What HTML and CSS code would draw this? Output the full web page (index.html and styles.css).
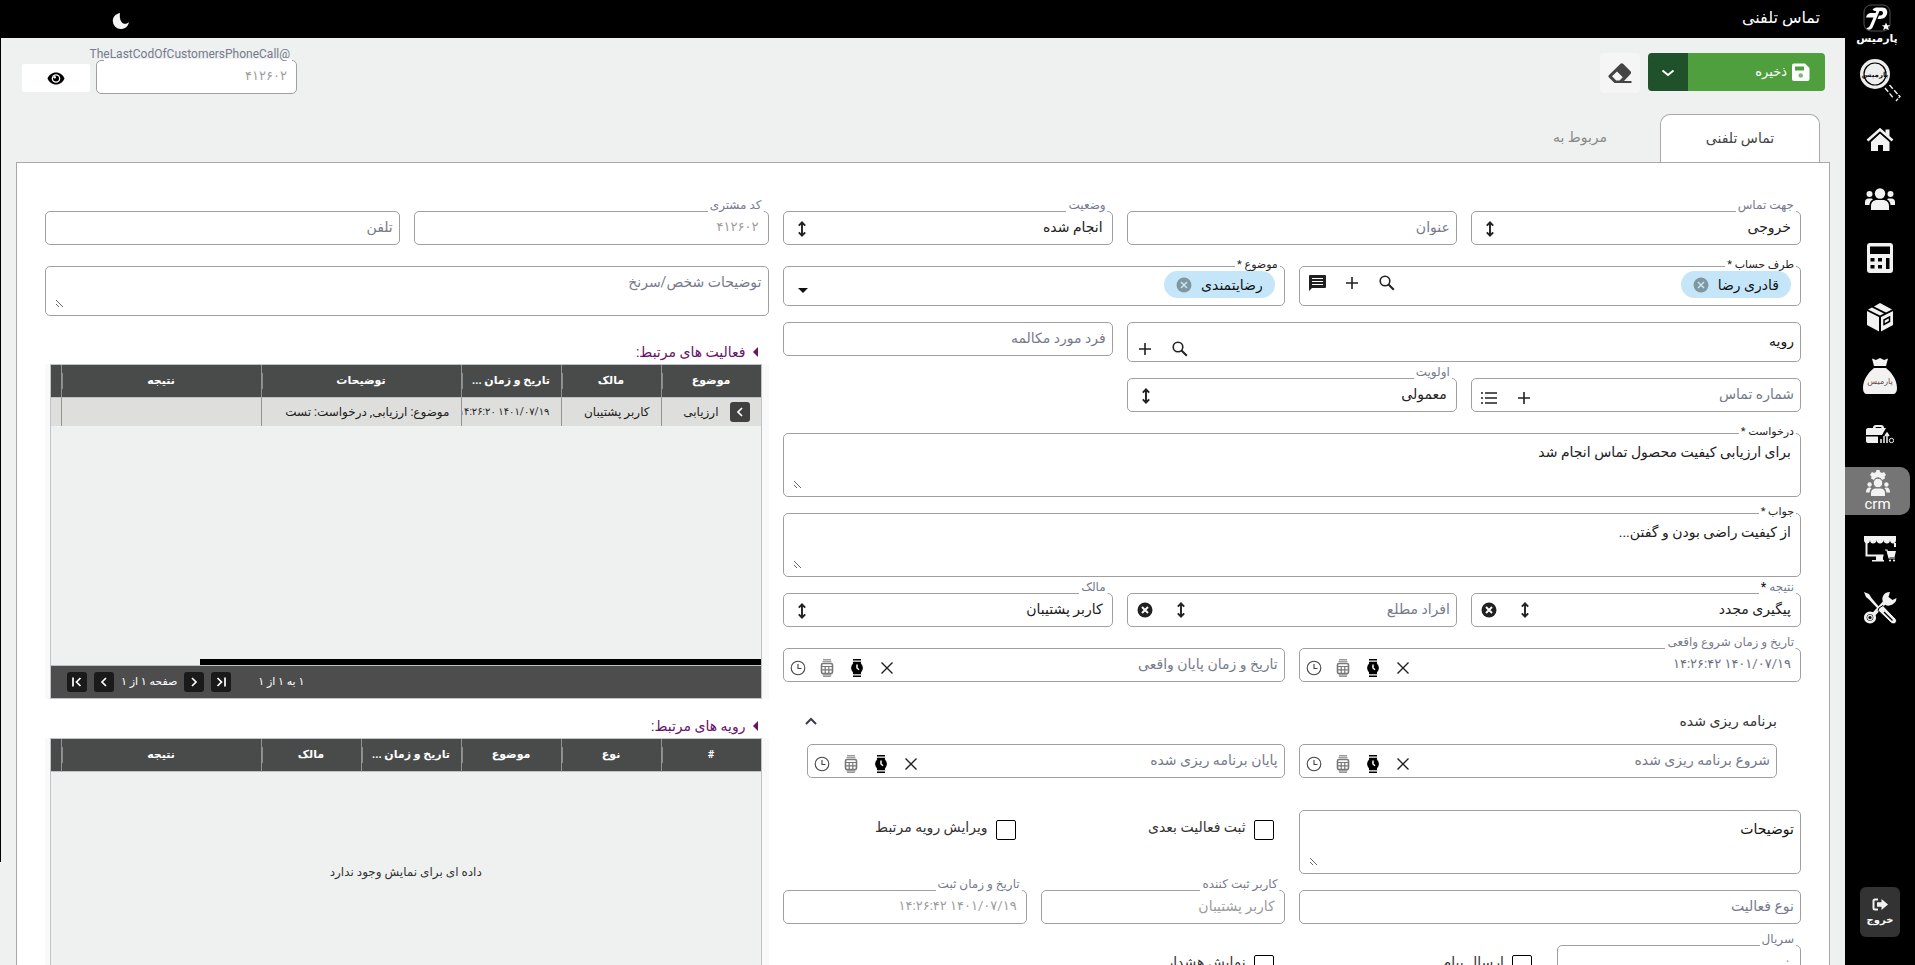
FILE: index.html
```html
<!DOCTYPE html>
<html lang="fa" dir="rtl">
<head>
<meta charset="utf-8">
<title>تماس تلفنی</title>
<link rel="stylesheet" href="styles.css">
</head>
<body>
<svg class="sprite" aria-hidden="true">
  <symbol id="updown" viewBox="0 0 10 16"><path d="M5 1.5v13M1.8 4.6 5 1.4l3.2 3.2M1.8 11.4 5 14.6l3.2-3.2" fill="none" stroke="currentColor" stroke-width="1.9"/></symbol>
  <symbol id="plus" viewBox="0 0 14 14"><path d="M7 1v12M1 7h12" fill="none" stroke="currentColor" stroke-width="1.6"/></symbol>
  <symbol id="search" viewBox="0 0 16 16"><circle cx="6" cy="6" r="4.8" fill="none" stroke="currentColor" stroke-width="1.6"/><path d="m9.5 9.5 5.3 5.3" stroke="currentColor" stroke-width="2"/></symbol>
  <symbol id="comment" viewBox="0 0 18 18"><path d="M2 1h15a1 1 0 0 1 1 1v11a1 1 0 0 1-1 1H4l-3 3V2a1 1 0 0 1 1-1z" fill="currentColor"/><path d="M4 4.5h11M4 7.5h11M4 10.5h11" stroke="#fff" stroke-width="1.2"/></symbol>
  <symbol id="list" viewBox="0 0 16 14"><path d="M4 2h12M4 7h12M4 12h12M0 2h2M0 7h2M0 12h2" stroke="currentColor" stroke-width="1.6"/></symbol>
  <symbol id="clear" viewBox="0 0 16 16"><circle cx="8" cy="8" r="7.5" fill="currentColor"/><path d="m5 5 6 6m0-6-6 6" stroke="#fff" stroke-width="1.9"/></symbol>
  <symbol id="chipx" viewBox="0 0 16 16"><circle cx="8" cy="8" r="7.5" fill="#80979f"/><path d="m5 5 6 6m0-6-6 6" stroke="#c5e6f8" stroke-width="1.5"/></symbol>
  <symbol id="times" viewBox="0 0 14 14"><path d="m1.5 1.5 11 11m0-11-11 11" stroke="currentColor" stroke-width="1.4"/></symbol>
  <symbol id="watch" viewBox="0 0 12 18"><path d="M2 0h8v1.500H2zM2 16.500h8V18H2zM2 2.800h8v2H2zM2 13.200h8v2H2z" fill="#000"/><circle cx="6" cy="9" r="5.900" fill="#000"/><path d="M6 5.400V9l2 1.800" fill="none" stroke="#fff" stroke-width="1.500"/></symbol>
  <symbol id="dwatch" viewBox="0 0 14 18"><path d="M3 .8h8M3 17.200h8" stroke="#999" stroke-width="1.600"/><path d="M2.500 2.700h9M2.500 15.800h9" stroke="#888" stroke-width="1"/><rect x="1.500" y="4.500" width="11" height="10" rx="1.500" fill="none" stroke="#777" stroke-width="1.600"/><path d="M2 7.500h10M2 10.800h10M5.200 7.500v7M8.800 7.500v7" stroke="#777" stroke-width="1.200"/></symbol>
  <symbol id="clock" viewBox="0 0 16 16"><circle cx="8" cy="8" r="6.800" fill="none" stroke="#444" stroke-width="1.100"/><path d="M8 4v4.500h3.500" fill="none" stroke="#444" stroke-width="1.100"/></symbol>
  <symbol id="left" viewBox="0 0 8 12"><path d="M6 2 2 6l4 4" fill="none" stroke="currentColor" stroke-width="1.700"/></symbol>
  <symbol id="first" viewBox="0 0 12 12"><path d="M2 1.500v9M9.500 2l-4 4 4 4" fill="none" stroke="currentColor" stroke-width="1.700"/></symbol>
  <symbol id="people" viewBox="0 0 30 22"><g fill="#f2f2f2"><circle cx="15" cy="5.500" r="5.200"/><circle cx="4.500" cy="6" r="3"/><circle cx="25.500" cy="6" r="3"/><path d="M6 22v-4c0-4 3-6 6-6h6c3 0 6 2 6 6v4zM0 17v-3c0-2 1.500-3.500 3.500-3.500H6c1 0 1.500.3 2 .8-2 1.200-3.400 3.200-3.600 5.700zM30 17v-3c0-2-1.500-3.500-3.500-3.500H24c-1 0-1.500.3-2 .8 2 1.200 3.400 3.200 3.600 5.700z"/></g></symbol>
</svg>
<div class="shell">
  <nav class="side" aria-label="منوی اصلی">
    <a class="brand" href="#">
      <svg width="28" height="28" viewBox="0 0 28 28"><rect x="1" y="1" width="26" height="26" rx="7" fill="none" stroke="#777" stroke-width=".7"/><path d="M9.500 5.500C11 4 12.500 3.500 14 3.500h5.500c7 0 6.500 11.500-2.500 11.500h-2.500l1.500-3.500h1.500c3 0 3.500-4.500.5-4.500h-1.500L10 22.500C8.500 26.500 4 26.500 3.500 24c2 0 2.800-1 3.500-2.500l3.500-8H3c.5-3 2.500-4.500 5-4.500h4.500l.8-1.700c-1.500-.3-3-.8-3.800-1.800z" fill="#fff"/><path d="m23 18.500 1.200 2.700h3l-2.300 1.900.9 3.200-2.800-1.800-2.800 1.800.9-3.200-2.300-1.900h3z" fill="#fff"/></svg>
      <span>پارمیس</span>
    </a>
    <a class="finder" href="#" aria-label="جستجوی پارمیس">
      <svg width="42" height="44" viewBox="0 0 42 44"><circle cx="15" cy="15" r="15" fill="#eee"/><circle cx="15" cy="15" r="11" fill="none" stroke="#000" stroke-width="1.200"/><text x="15" y="18" font-size="7" font-weight="700" text-anchor="middle" fill="#111">پارمیس</text><path d="m25 29 8 9.500M29.500 26l8 9" fill="none" stroke="#eee" stroke-width="1.400" stroke-dasharray="5 2"/><path d="m38.500 36 1.500 1.500-4 4.500" fill="none" stroke="#eee" stroke-width="1.400" stroke-dasharray="4 1"/></svg>
    </a>
    <a class="item" href="#" aria-label="خانه"><svg width="28" height="24" viewBox="0 0 28 24"><path d="M14 5.500 23.500 14v9h-6.500v-6h-5v6H5v-9z" fill="#f2f2f2"/><path d="m1.500 12.500 12.500-11 12.500 11" fill="none" stroke="#f2f2f2" stroke-width="2.600"/><path d="m3 14.500 11-9.800 11 9.800" fill="none" stroke="#000"/><path d="M19.500 1.500h4V9l-4-3.500z" fill="#f2f2f2"/></svg></a>
    <a class="item" href="#" aria-label="اشخاص"><svg width="30" height="22"><use href="#people"/></svg></a>
    <a class="item" href="#" aria-label="حسابداری"><svg width="26" height="30" viewBox="0 0 26 30"><rect width="26" height="30" rx="3" fill="#f2f2f2"/><path d="M3 3.500h20V11H3z"/><path d="M3.500 15h4v3.500h-4zM11 15h4v3.500h-4zM3.500 22h4v3.500h-4zM11 22h4v3.500h-4zM19 15h3.500v11H19z"/></svg></a>
    <a class="item" href="#" aria-label="انبار"><svg width="28" height="30" viewBox="0 0 28 30"><path d="M1 9v14l12 6.500V15zM27 9v14l-12 6.500V15zM14 13.500 2 7.500l4-2 12 6zM20 10.500 8 4.500l6-3.500 12 6.500z" fill="#f2f2f2"/><path d="m18 18 5.500-3v4.500l-5.500 3z" fill="none" stroke="#000" stroke-width="1.500"/></svg></a>
    <a class="item" href="#" aria-label="خزانه"><svg width="36" height="38" viewBox="0 0 36 38"><path d="M10 1.500 14 3l4-2 4 2 4-1.500-2 7.500H12zM12 11h12c5 4 11 11 11 20 0 4-1.500 6-4 6H5c-2.500 0-4-2-4-6 0-9 6-16 11-20z" fill="#f2f2f2"/><text x="18" y="27" font-size="8" text-anchor="middle" fill="#6b4a45">پارمیس</text></svg></a>
    <a class="item" href="#" aria-label="گزارش"><svg width="28" height="20" viewBox="0 0 28 20"><path d="M7 3c0-2 1-3 3-3h5c2 0 3 1 3 3h2l-4 7H0V5c0-1 .8-2 2-2zm2.500 0h6c0-.8-.3-1-1-1h-4c-.7 0-1 .2-1 1zM0 11.500h12V18H2c-1.200 0-2-.8-2-2z" fill="#f2f2f2"/><path d="M15 18v-4M18 18v-7M21 18V9m-2 2 2-3 2 3" stroke="#f2f2f2" stroke-width="1.500" fill="none"/><circle cx="25.500" cy="15.500" r="2.200" fill="none" stroke="#f2f2f2"/></svg></a>
    <a class="item active" href="#"><svg width="24" height="27" viewBox="0 0 24 27"><g fill="#f2f2f2"><path d="M10.500 0h3l.5 2 2 1 2-1 2 3-1.500 1.500.5 2-3 1.500A4.300 4.300 0 0 0 8 10L5 8.500l.5-2L4 5l2-3 2 1 2-1z"/><circle cx="12" cy="13" r="4.800" stroke="#757575"/><circle cx="3.600" cy="14.500" r="2.200"/><circle cx="20.400" cy="14.500" r="2.200"/><path d="M5 26v-3c0-3 2-4.500 4.500-4.500h5c2.500 0 4.500 1.500 4.500 4.500v3zM0 22.500c0-3 1-5 3.500-5 1 0 1.500.3 2 .8-1.200 1-1.800 2.500-1.900 4.200zM24 22.500c0-3-1-5-3.500-5-1 0-1.500.3-2 .8 1.200 1 1.800 2.500 1.900 4.200z"/></g></svg><span>crm</span></a>
    <a class="item" href="#" aria-label="فروشگاه"><svg width="34" height="26" viewBox="0 0 34 26"><path d="M1 0h32v4c0 2-1.300 3.500-3 3.500S27 6 27 4c0 2-1 3.500-3 3.500S20.500 6 20.500 4c0 2-1.500 3.500-3.500 3.500S13.500 6 13.500 4c0 2-1.500 3.500-3.500 3.500S7 6 7 4c0 2-1.300 3.500-3 3.500S1 6 1 4z" fill="#f2f2f2"/><path d="M3.500 7v12.500h17M32 7v4" fill="none" stroke="#f2f2f2" stroke-width="2"/><path d="M9 24h12v1.600H9zM13 20h7v4h-7zM24 15h9l-1.500 6h-6z" fill="#f2f2f2"/><path d="m22 14 2 0 2 8h6" fill="none" stroke="#f2f2f2" stroke-width="1.200"/><circle cx="27" cy="24.500" r="1.100" fill="#f2f2f2"/><circle cx="31" cy="24.500" r="1.100" fill="#f2f2f2"/></svg></a>
    <a class="item" href="#" aria-label="تنظیمات"><svg width="34" height="34" viewBox="0 0 34 34"><path d="m1 1 5 2 2.500 4L17 17l-1.500 1.500L6 8.500 3 6z" fill="#f2f2f2"/><path d="M11 23 22 11" stroke="#f2f2f2" stroke-width="4"/><path d="m16 17 4-2.500L33 28c2 3-2 6.500-5 4L15 19.500z" fill="#f2f2f2" stroke="#000"/><path d="m21 21 8.500 8.500" stroke="#000" stroke-width="1.300"/><path d="M27 1c-6 0-9 5-7 10s9 5 13-1l.5-3-4 2-4-3z" fill="#f2f2f2"/><circle cx="7" cy="26.500" r="4.700" fill="#000" stroke="#f2f2f2" stroke-width="2.800"/><circle cx="7" cy="26.500" r="2.200" fill="none" stroke="#f2f2f2" stroke-width="1.200"/></svg></a>
    <button class="exit" type="button"><svg width="16" height="13" viewBox="0 0 16 13"><path d="M6 1.500H3c-1 0-1.500.5-1.500 1.500v7c0 1 .5 1.500 1.500 1.500h3" fill="none" stroke="#f2f2f2" stroke-width="2"/><path d="M5 4.200h4.500V1L16 6.500 9.500 12V8.800H5z" fill="#f2f2f2"/></svg><span>خروج</span></button>
  </nav>

  <div class="work">
    <header class="top">
      <h1>تماس تلفنی</h1>
      <button type="button" class="moon" aria-label="حالت شب"><svg width="18" height="18" viewBox="0 0 18 18"><path d="M8 1C3 2 .8 5.500.8 9a8 8 0 0 0 8 8c4 0 7.500-2.500 8.200-7-3 3.500-10.500 2.500-9-9z" fill="#f4f4f4"/></svg></button>
    </header>
    <main class="main">
      <div class="toolbar">
        <div class="save">
          <button type="button" class="save-main"><svg width="18" height="18" viewBox="0 0 18 18"><path d="M2 .5h11L17.500 5v11a2 2 0 0 1-2 2H2a2 2 0 0 1-2-2V2.500a2 2 0 0 1 2-2z" fill="#fff"/><path d="M3 3.500h9v4H3z" fill="#4f9f3f"/><circle cx="8.700" cy="12.500" r="2.300" fill="#7cba70"/></svg>ذخیره</button>
          <button type="button" class="save-more" aria-label="گزینه‌های ذخیره"><svg width="14" height="8" viewBox="0 0 14 8"><path d="m1.500 1.500 5.500 4.500 5.500-4.500" fill="none" stroke="#fff" stroke-width="2"/></svg></button>
        </div>
        <button type="button" class="erase" aria-label="پاک کردن"><svg width="24" height="20" viewBox="0 0 24 20"><path fill="#444" fill-rule="evenodd" d="M12.500.8c.8-.8 1.800-.8 2.600 0l7.400 7.500c.8.800.8 1.800 0 2.600L16 18h7.500v2H6.500L1 14.500c-.8-.8-.8-1.800 0-2.600zM9 8.500l-5 4.700L8.200 17.500h3.300l3.300-3.300z"/></svg></button>
        <div class="spacer"></div>
        <div class="field code">
          <label for="code">@TheLastCodOfCustomersPhoneCall</label>
          <input id="code" class="value num" value="۴۱۲۶۰۲" disabled>
        </div>
        <button type="button" class="eye" aria-label="نمایش"><svg width="18" height="13" viewBox="0 0 18 13"><path d="M9 .5c4 0 7 2.500 8.500 6-1.500 3.500-4.500 6-8.500 6S2 10 .5 6.500C2 3 5 .5 9 .5z"/><circle cx="9" cy="6.500" r="4.300" fill="#fff"/><circle cx="9" cy="6.500" r="3"/><circle cx="7.700" cy="5.300" r="1.200" fill="#fff"/></svg></button>
      </div>

      <div class="tabs" role="tablist">
        <button type="button" role="tab" class="tab on" aria-selected="true">تماس تلفنی</button>
        <button type="button" role="tab" class="tab" aria-selected="false">مربوط به</button>
      </div>

      <form class="panel">
        <section class="grid s7">
          <div class="field s4"><label for="dir">جهت تماس</label><select id="dir"><option>خروجی</option></select><svg class="ud"><use href="#updown"/></svg></div>
          <div class="field s4"><input aria-label="عنوان" placeholder="عنوان"></div>
          <div class="field s4"><label for="state">وضعیت</label><select id="state"><option>انجام شده</option></select><svg class="ud"><use href="#updown"/></svg></div>

          <div class="field tall s6"><label class="req" for="party">طرف حساب *</label>
            <span class="chip">قادری رضا<button type="button" aria-label="حذف قادری رضا"><svg><use href="#chipx"/></svg></button></span>
            <input id="party">
            <span class="acts up"><button type="button" aria-label="جستجو"><svg><use href="#search"/></svg></button><button type="button" aria-label="افزودن"><svg class="sm"><use href="#plus"/></svg></button><button type="button" aria-label="پیام"><svg class="lg"><use href="#comment"/></svg></button></span></div>
          <div class="field tall s6"><label class="req" for="subject">موضوع *</label>
            <span class="chip">رضایتمندی<button type="button" aria-label="حذف رضایتمندی"><svg><use href="#chipx"/></svg></button></span>
            <input id="subject"><span class="caret"></span></div>

          <div class="field tall s8"><input class="dark" aria-label="رویه" placeholder="رویه">
            <span class="acts low"><button type="button" aria-label="جستجو"><svg><use href="#search"/></svg></button><button type="button" aria-label="افزودن"><svg class="sm"><use href="#plus"/></svg></button></span></div>
          <div class="field s4"><input aria-label="فرد مورد مکالمه" placeholder="فرد مورد مکالمه"></div>

          <div class="field s4"><input aria-label="شماره تماس" placeholder="شماره تماس">
            <span class="acts low"><button type="button" aria-label="افزودن"><svg class="sm"><use href="#plus"/></svg></button><button type="button" aria-label="فهرست"><svg><use href="#list"/></svg></button></span></div>
          <div class="field s4"><label for="prio">اولویت</label><select id="prio"><option>معمولی</option></select><svg class="ud"><use href="#updown"/></svg></div>
          <div class="s4"></div>

          <div class="field area s12"><label class="req" for="ask">درخواست *</label><textarea id="ask">برای ارزیابی کیفیت محصول تماس انجام شد</textarea></div>
          <div class="field area s12"><label class="req" for="ans">جواب *</label><textarea id="ans">از کیفیت راضی بودن و گفتن...</textarea></div>

          <div class="field s4"><label for="res">نتیجه <b>*</b></label><select id="res"><option>پیگیری مجدد</option></select><span class="acts"><svg class="udi"><use href="#updown"/></svg><button type="button" aria-label="پاک کردن نتیجه"><svg><use href="#clear"/></svg></button></span></div>
          <div class="field s4"><select class="empty" aria-label="افراد مطلع"><option>افراد مطلع</option></select><span class="acts"><svg class="udi"><use href="#updown"/></svg><button type="button" aria-label="پاک کردن افراد مطلع"><svg><use href="#clear"/></svg></button></span></div>
          <div class="field s4"><label for="owner">مالک</label><select id="owner"><option>کاربر پشتیبان</option></select><svg class="ud"><use href="#updown"/></svg></div>

          <div class="field s6"><label for="start">تاریخ و زمان شروع واقعی</label><input id="start" class="value num date" value="۱۴۰۱/۰۷/۱۹ ۱۴:۲۶:۴۲">
            <span class="acts dt"><button type="button" aria-label="پاک کردن"><svg class="sm"><use href="#times"/></svg></button><button type="button" aria-label="اکنون"><svg class="w"><use href="#watch"/></svg></button><button type="button" aria-label="تقویم"><svg class="dw"><use href="#dwatch"/></svg></button><button type="button" aria-label="ساعت"><svg><use href="#clock"/></svg></button></span></div>
          <div class="field s6"><input aria-label="تاریخ و زمان پایان واقعی" placeholder="تاریخ و زمان پایان واقعی">
            <span class="acts dt"><button type="button" aria-label="پاک کردن"><svg class="sm"><use href="#times"/></svg></button><button type="button" aria-label="اکنون"><svg class="w"><use href="#watch"/></svg></button><button type="button" aria-label="تقویم"><svg class="dw"><use href="#dwatch"/></svg></button><button type="button" aria-label="ساعت"><svg><use href="#clock"/></svg></button></span></div>

          <div class="plan s12">
            <button type="button" class="plan-head">برنامه ریزی شده<svg width="12" height="8" viewBox="0 0 12 8"><path d="m1 7 5-5 5 5" fill="none" stroke="#3c3c4c" stroke-width="2"/></svg></button>
            <div class="plan-row">
              <div class="field"><input aria-label="شروع برنامه ریزی شده" placeholder="شروع برنامه ریزی شده">
                <span class="acts dt"><button type="button" aria-label="پاک کردن"><svg class="sm"><use href="#times"/></svg></button><button type="button" aria-label="اکنون"><svg class="w"><use href="#watch"/></svg></button><button type="button" aria-label="تقویم"><svg class="dw"><use href="#dwatch"/></svg></button><button type="button" aria-label="ساعت"><svg><use href="#clock"/></svg></button></span></div>
              <div class="field"><input aria-label="پایان برنامه ریزی شده" placeholder="پایان برنامه ریزی شده">
                <span class="acts dt"><button type="button" aria-label="پاک کردن"><svg class="sm"><use href="#times"/></svg></button><button type="button" aria-label="اکنون"><svg class="w"><use href="#watch"/></svg></button><button type="button" aria-label="تقویم"><svg class="dw"><use href="#dwatch"/></svg></button><button type="button" aria-label="ساعت"><svg><use href="#clock"/></svg></button></span></div>
            </div>
          </div>

          <div class="field area s6"><textarea class="dark" aria-label="توضیحات" placeholder="توضیحات"></textarea></div>
          <label class="check s3"><input type="checkbox">ثبت فعالیت بعدی</label>
          <label class="check s3"><input type="checkbox">ویرایش رویه مرتبط</label>

          <div class="field s6"><input aria-label="نوع فعالیت" placeholder="نوع فعالیت"></div>
          <div class="field s3"><label for="by">کاربر ثبت کننده</label><input id="by" class="value" value="کاربر پشتیبان" disabled></div>
          <div class="field s3"><label for="at">تاریخ و زمان ثبت</label><input id="at" class="value num" value="۱۴۰۱/۰۷/۱۹ ۱۴:۲۶:۴۲" disabled></div>

          <div class="field s3"><label for="serial">سریال</label><input id="serial" class="value num" value="۰" disabled></div>
          <label class="check s3"><input type="checkbox">ارسال پیام</label>
          <label class="check s3"><input type="checkbox">نمایش هشدار</label>
        </section>

        <section class="grid s5">
          <div class="field s6"><label for="cust">کد مشتری</label><input id="cust" class="value num" value="۴۱۲۶۰۲" disabled></div>
          <div class="field s6"><input aria-label="تلفن" placeholder="تلفن"></div>
          <div class="field area short s12"><textarea aria-label="توضیحات شخص/سرنخ" placeholder="توضیحات شخص/سرنخ"></textarea></div>

          <div class="block s12">
            <h2>فعالیت های مرتبط:</h2>
            <div class="gridwrap"><div class="datagrid">
              <table>
                <colgroup><col class="c1"><col class="c1"><col class="c1"><col class="c2"><col class="c2"><col></colgroup>
                <thead><tr><th>موضوع</th><th>مالک</th><th>تاریخ و زمان ...</th><th>توضیحات</th><th>نتیجه</th><th></th></tr></thead>
                <tbody><tr><td class="lead"><button type="button" class="open" aria-label="باز کردن"><svg width="8" height="12"><use href="#left"/></svg></button>ارزیابی</td><td>کاربر پشتیبان</td><td class="when">۱۴۰۱/۰۷/۱۹ ۱۴:۲۶:۲۰</td><td>موضوع: ارزیابی, درخواست: تست</td><td></td><td></td></tr></tbody>
              </table>
              <div class="fill"></div>
              <div class="hbar"></div>
              <div class="pager">
                <span class="count">۱ به ۱ از ۱</span>
                <button type="button" class="flip" aria-label="صفحه اول"><svg width="12" height="12"><use href="#first"/></svg></button>
                <button type="button" class="flip" aria-label="صفحه قبل"><svg width="8" height="12"><use href="#left"/></svg></button>
                <span>صفحه ۱ از ۱</span>
                <button type="button" aria-label="صفحه بعد"><svg width="8" height="12"><use href="#left"/></svg></button>
                <button type="button" aria-label="صفحه آخر"><svg width="12" height="12"><use href="#first"/></svg></button>
              </div>
            </div></div>
          </div>

          <div class="block s12">
            <h2>رویه های مرتبط:</h2>
            <div class="gridwrap"><div class="datagrid low">
              <table>
                <colgroup><col class="c1"><col class="c1"><col class="c1"><col class="c1"><col class="c1"><col class="c2"><col></colgroup>
                <thead><tr><th>#</th><th>نوع</th><th>موضوع</th><th>تاریخ و زمان ...</th><th>مالک</th><th>نتیجه</th><th></th></tr></thead>
              </table>
              <p class="none">داده ای برای نمایش وجود ندارد</p>
            </div></div>
          </div>
        </section>
      </form>
    </main>
  </div>
</div>
</body>
</html>
```

FILE: styles.css
```css
* { box-sizing: border-box; }
html, body { height: 100%; }
body {
  margin: 0;
  overflow: hidden;
  background: #eff1f1;
  color: #212121;
  font: 14px/20px Roboto, "DejaVu Sans", sans-serif;
}
button, input, select, textarea { font: inherit; color: inherit; }
button { padding: 0; border: 0; background: none; cursor: pointer; }
a { color: inherit; text-decoration: none; }
.sprite { position: absolute; width: 0; height: 0; }

.shell { display: flex; height: 100vh; }

/* side menu */
.side { flex: none; display: flex; flex-direction: column; width: 70px; background: #000; color: #fff; }
.side svg { display: block; }
.brand { display: flex; flex-direction: column; align-items: center; height: 55px; padding: 4px 6px 0 0; font-size: 11px; line-height: 14px; font-weight: 700; }
.finder { display: flex; height: 55px; padding: 4px 13px 0 15px; direction: ltr; }
.item { display: flex; flex-direction: column; align-items: center; justify-content: center; height: 59px; }
.item.active { height: 48px; margin: 3px 5px 4px 0; border-radius: 0 10px 10px 0; background: #757575; font-size: 15px; line-height: 15px; }
.exit { display: flex; flex-direction: column; align-items: center; justify-content: center; gap: 2px; width: 40px; height: 50px; margin: auto auto 28px; border-radius: 6px; background: #333; color: #fff; font-size: 10px; line-height: 14px; font-weight: 700; }

.work { flex: 1; min-width: 0; display: flex; flex-direction: column; }
.top { flex: none; display: flex; align-items: center; justify-content: space-between; height: 38px; padding: 0 25px 2px 112px; background: #000; color: #fff; }
.top h1 { margin: 0; font-size: 16px; font-weight: 500; line-height: 20px; }
.moon { padding-top: 6px; }
.moon svg { display: block; }

.main { flex: 1; min-height: 0; overflow: hidden; padding: 15px 15px 0 16px; background: linear-gradient(#000, #000) left top / 1px 824px no-repeat #eff1f1; }

/* toolbar */
.toolbar { display: flex; align-items: flex-start; height: 61px; padding: 0 5px 0 6px; }
.save { display: flex; width: 177px; height: 38px; border-radius: 4px; overflow: hidden; color: #fff; }
.save-main { flex: 1; display: flex; align-items: center; gap: 5px; padding-right: 15px; background: #4f9f3f; font-size: 13px; font-weight: 500; }
.save-more { width: 40px; background: #1f512a; }
.erase { display: grid; place-items: center; width: 40px; height: 40px; margin-right: 8px; border-radius: 4px; background: #f5f5f5; }
.spacer { flex: 1; }
.field.code { width: 201px; margin: 7px 0 0 6px; }
.field.code label { background-size: calc(100% - 16px) 100%; }
.eye { display: grid; place-items: center; width: 68px; height: 28px; margin-top: 11px; border-radius: 2px; background: #fff; }

/* tabs */
.tabs { display: flex; padding-right: 10px; }
.tab { width: 160px; height: 48px; padding-bottom: 2px; color: #888; }
.tab.on { position: relative; margin-bottom: -1px; border: 1px solid #a8a8a8; border-bottom: 0; border-radius: 10px 10px 0 0; background: #fff; color: #444; }

.panel { display: grid; grid-template-columns: repeat(12, minmax(0, 1fr)); column-gap: 14px; align-items: start; padding: 48px 28px 40px; border: 1px solid #a8a8a8; background: #fff; }
.grid { display: grid; grid-template-columns: repeat(12, minmax(0, 1fr)); gap: 16px 14px; align-items: start; }
.s3 { grid-column: span 3; }
.s4 { grid-column: span 4; }
.s5 { grid-column: span 5; }
.s6 { grid-column: span 6; }
.s7 { grid-column: span 7; }
.s8 { grid-column: span 8; }
.s12 { grid-column: span 12; }

/* outlined fields */
.field { position: relative; display: flex; height: 34px; margin-bottom: 5px; border: 1px solid #a0a0a0; border-radius: 5px; background: #fff; }
.field.tall { height: 40px; margin-bottom: 0; }
.field.area { height: 64px; margin-bottom: 0; }
.field.area.short { height: 50px; }
.field > label { position: absolute; top: -14px; right: 4px; padding: 0 2px; color: #767a8c; font-size: 12px; line-height: 14px; white-space: nowrap; background: linear-gradient(transparent 12px, #fff 12px) right / 100% 100% no-repeat; }
.field > label { line-height: 15px; }
.field > label.req { top: -10px; color: #212121; font-size: 11px; background: linear-gradient(transparent 9px, #fff 9px 11px, transparent 11px); }
.field > label b { color: #212121; }
.field input { flex: 1; min-width: 0; padding: 0 6px 3px; border: 0; background: none; outline: 0; }
.field input.value { padding-right: 9px; }
.field input.num { font-size: 13px; }
.field input:disabled { color: #9c9c9c; }
.field input.date { color: #6c7082; }
.field ::placeholder { color: #767a8c; opacity: 1; }
.field .dark::placeholder { color: #111; }
.field select { flex: 1; min-width: 0; padding: 0 9px 2px; border: 0; background: none; appearance: none; outline: 0; }
.field select.empty { padding-right: 6px; color: #767a8c; }
.field textarea { flex: 1; min-width: 0; margin: 7px 0 7px 9px; padding: 1px 9px 0; border: 0; background: none; outline: 0; resize: vertical; overflow: hidden; }
.field textarea.dark, .short textarea { padding-right: 6px; }
.field.short textarea { margin-top: 4px; }
.ud { width: 10px; height: 16px; margin: 9px 0 0 13px; }
.udi { width: 10px; height: 16px; margin: 0 12px 0 13px; }
.acts { display: flex; align-items: center; }
.acts button { display: grid; place-items: center; width: 35px; height: 20px; }
.acts svg { width: 16px; height: 16px; }
.acts svg.udi { width: 10px; }
.acts svg.sm { width: 14px; height: 14px; }
.acts svg.lg { width: 18px; height: 18px; }
.acts svg.w { width: 12px; height: 18px; }
.acts svg.dw { width: 14px; height: 18px; }
.acts.up { padding-bottom: 6px; }
.acts.low { padding-top: 6px; }
.tall .acts.low { padding-top: 14px; }
.acts.dt { padding-top: 6px; }
.acts.dt button { width: 30px; }
.acts.dt button:last-child { width: 28px; }
.chip { display: flex; align-items: center; gap: 9px; height: 27px; margin: 4px 9px 0 0; padding: 0 12px; border-radius: 14px; background: #c5e6f8; color: #111; }
.chip svg { display: block; width: 16px; height: 16px; }
.caret { height: 0; margin: 21px 0 0 14px; border: 5px solid transparent; border-top-color: #111; }

.plan { padding: 0 24px 11px; }
.plan-head { display: flex; align-items: center; justify-content: space-between; width: 100%; height: 36px; margin-bottom: 5px; color: #333; }
.plan-head svg { margin-left: -2px; }
.plan-row { display: grid; grid-template-columns: 1fr 1fr; gap: 14px; }

.check { display: flex; align-items: flex-start; gap: 8px; height: 40px; padding: 10px 11px 0 0; color: #333; line-height: 14px; white-space: nowrap; }
.check input { flex: none; appearance: none; width: 20px; height: 20px; margin: 0; border: 1px solid #000; border-radius: 2px; background: #fff; }

/* related grids */
.block h2 { display: flex; align-items: center; gap: 7px; height: 24px; margin: 8px 0 0; padding-right: 11px; color: #6a0f6a; font-size: 14px; font-weight: 400; }
.block h2::before { content: ""; border: 5px solid transparent; border-left-width: 0; border-right-color: #6a0f6a; }
.block + .block h2 { margin-top: -1px; }
.gridwrap { padding: 0 7px 0 5px; background: #f9f9f9; }
.datagrid { display: flex; flex-direction: column; height: 335px; border: 1px solid #bdc3c7; background: #eff1f1; }
.datagrid.low { height: 235px; }
table { width: 100%; table-layout: fixed; border-spacing: 0; font-size: 12px; }
.c1 { width: 100px; }
.c2 { width: 200px; }
th, td { overflow: hidden; padding: 0 11px; white-space: nowrap; border-left: 1px solid #939393; }
th { height: 33px; padding: 0 4px; border-bottom: 1px solid #bdc3c7; background: linear-gradient(#8a8c8b, #8a8c8b) left center / 1px 16px no-repeat #494b4a; color: #fff; font-size: 11px; font-weight: 700; }
td { height: 28px; background: #dededd; text-align: right; }
th:last-child, td:last-child { border-left: 0; padding: 0; }
th:last-child { background: #494b4a; }
td.when { padding-left: 0; font-size: 10px; }
.open { display: inline-grid; place-items: center; width: 20px; height: 20px; margin-left: 11px; border-radius: 3px; background: #404040; color: #fff; vertical-align: middle; }
.fill { flex: 1; }
.hbar { width: 79%; height: 6px; background: #000; }
.pager { display: flex; align-items: center; justify-content: flex-end; gap: 7px; height: 33px; padding: 0 16px; border-top: 1px solid #bdc3c7; background: #4d4d4d; color: #fff; font-size: 11px; }
.pager button { display: grid; place-items: center; width: 20px; height: 20px; border-radius: 3px; background: #1a1a1a; color: #fff; }
.pager .flip svg { transform: scaleX(-1); }
.count { margin-left: 20px; }
.none { margin: auto; color: #333; font-size: 12px; }
```
